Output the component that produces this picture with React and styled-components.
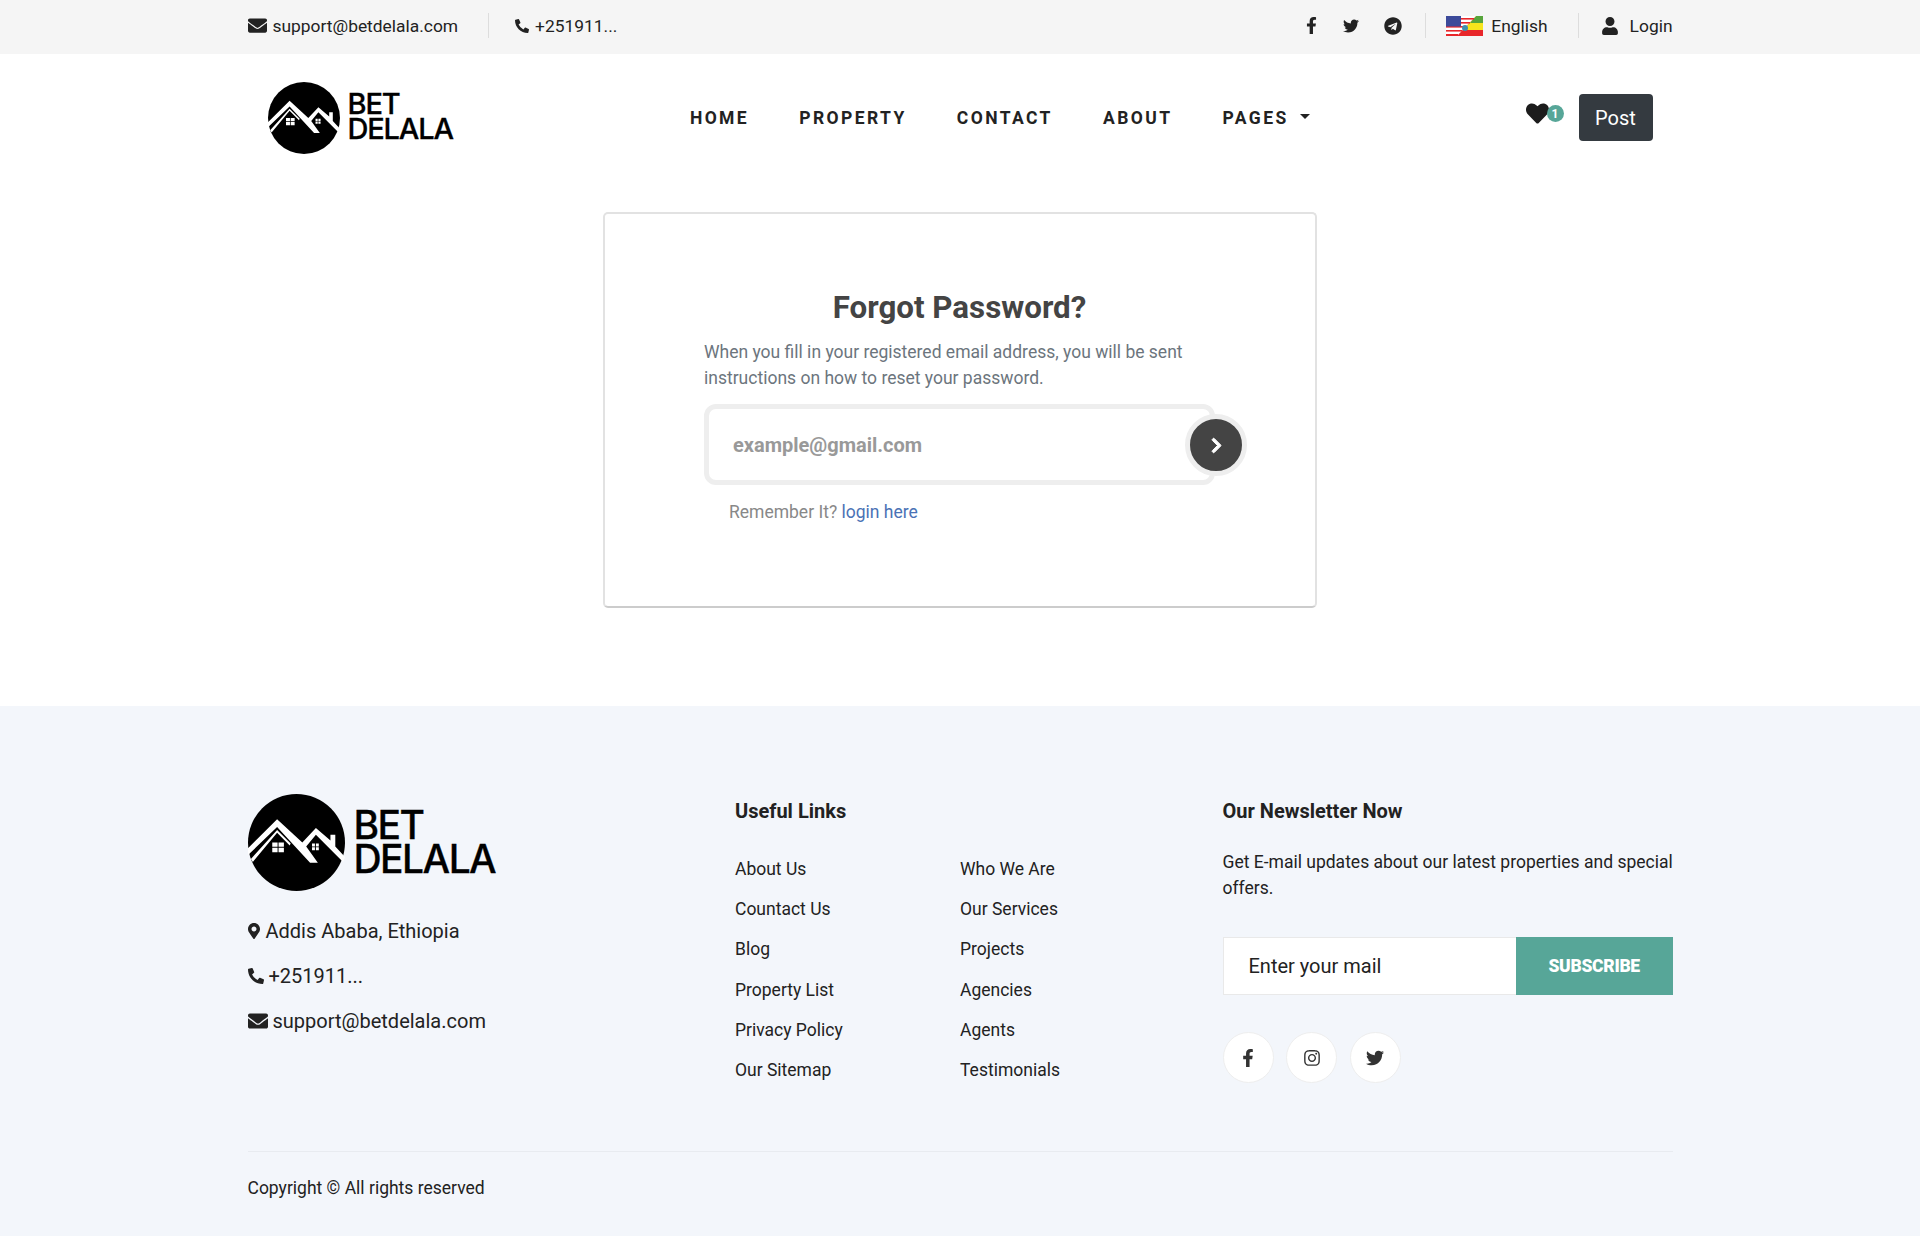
import React from 'react'
import styled, { createGlobalStyle } from 'styled-components'
import {
    FaEnvelope,
    FaPhoneAlt,
    FaFacebookF,
    FaTwitter,
    FaTelegram,
    FaUser,
    FaHeart,
    FaChevronRight,
    FaMapMarkerAlt,
    FaInstagram,
} from 'react-icons/fa'

const GlobalStyle = createGlobalStyle`
    * { box-sizing: border-box; }
    body {
        margin: 0;
        background: #fff;
        font-family: Roboto, "Liberation Sans", sans-serif;
        color: #212529;
    }
`

const Container = styled.div`
    width: 1425px;
    margin: 0 auto;
`

const TopBar = styled.div`
    height: 54px;
    background: #f5f5f5;
    font-size: 17.4px;
    color: #222;
`

const TopInner = styled(Container)`
    height: 100%;
    padding-bottom: 3px;
    display: flex;
    align-items: center;
    justify-content: space-between;
`

const TopGroup = styled.div`
    display: flex;
    align-items: center;
`

const TopItem = styled.span`
    display: flex;
    align-items: center;
    gap: ${(p) => p.$gap || 6}px;
    svg {
        width: auto;
        height: ${(p) => p.$icon || 17}px;
    }
`

const Sep = styled.span`
    width: 1px;
    height: 25px;
    background: #ddd;
    margin: 0 ${(p) => p.$right || 26}px 0 ${(p) => p.$left || 30}px;
`

const Social = styled.a`
    display: flex;
    margin-left: ${(p) => p.$gap || 0}px;
    color: #222;
    svg {
        width: auto;
        height: ${(p) => p.$size || 16}px;
    }
`

const Header = styled(Container)`
    height: 127px;
    padding: 0 20px;
    display: flex;
    align-items: center;
`

const LogoWrap = styled.div`
    display: flex;
    align-items: center;
    gap: ${(p) => p.$gap}px;
    color: #000;
`

const LogoText = styled.div`
    margin-top: ${(p) => p.$lift}px;
    font-family: Inter, Roboto, sans-serif;
    font-weight: 500;
    font-size: ${(p) => p.$size}px;
    line-height: ${(p) => p.$line}px;
    letter-spacing: -0.04em;
    -webkit-text-stroke: 0.3px #000;
`

const Nav = styled.nav`
    display: flex;
    gap: 50.2px;
    margin-left: 237px;
    flex: 1;
`

const NavLink = styled.a`
    font-size: 17.5px;
    font-weight: 700;
    letter-spacing: 2.4px;
    color: #222;
    display: flex;
    align-items: center;
`

const Caret = styled.span`
    margin-left: 11px;
    margin-bottom: 3px;
    border-top: 5px solid #222;
    border-left: 5px solid transparent;
    border-right: 5px solid transparent;
`

const Wish = styled.div`
    position: relative;
    width: 37px;
    margin-right: 16px;
    display: flex;
    font-size: 23px;
    color: #1c1c1c;
    margin-top: -8px;
`

const Badge = styled.span`
    position: absolute;
    left: 21px;
    top: 3px;
    width: 17px;
    height: 17px;
    border-radius: 50%;
    background: #57a698;
    color: #fff;
    font-size: 12px;
    font-weight: 700;
    display: flex;
    align-items: center;
    justify-content: center;
`

const PostButton = styled.button`
    width: 74px;
    height: 47px;
    border: 0;
    border-radius: 4px;
    background: #343a40;
    color: #fff;
    font-family: inherit;
    font-size: 20px;
`

const Main = styled.main`
    height: 525px;
    padding-top: 31px;
`

const Card = styled.div`
    width: 714px;
    height: 396px;
    margin: 0 auto;
    padding: 76px 100px 0 99px;
    background: #fff;
    border: 2px solid #e2e2e2;
    border-bottom-color: #ccc;
    border-radius: 5px;
`

const Title = styled.h2`
    margin: 0 0 13px;
    text-align: center;
    font-size: 31.3px;
    line-height: 36px;
    font-weight: 700;
    color: #444;
`

const Lead = styled.p`
    margin: 0 0 13px;
    font-size: 17.5px;
    line-height: 26px;
    font-weight: 400;
    color: #6c757d;
`

const InputBox = styled.div`
    position: relative;
    width: 511px;
    height: 81px;
    border: 5px solid #eee;
    border-radius: 12px;
    display: flex;
    align-items: center;
    padding-left: 24px;
    font-size: 20px;
    font-weight: 700;
    color: #999;
`

const RoundButton = styled.span`
    position: absolute;
    right: -37px;
    top: 5px;
    width: 62px;
    height: 62px;
    border-radius: 50%;
    border: 5px solid #eee;
    background: #444;
    color: #fff;
    font-size: 17px;
    display: flex;
    align-items: center;
    justify-content: center;
    svg {
        stroke: currentColor;
        stroke-width: 30px;
    }
`

const Remember = styled.div`
    margin: 17px 0 0 25px;
    font-size: 17.5px;
    font-weight: 400;
    color: #888;
    a { color: #4a72b5; }
`

const Footer = styled.footer`
    height: 530px;
    background: #f3f6fb;
    padding-top: 88px;
`

const FooterGrid = styled.div`
    display: grid;
    grid-template-columns: repeat(3, 450px);
    column-gap: 37.5px;
    height: 357px;
`

const ContactLine = styled.div`
    display: flex;
    align-items: center;
    gap: ${(p) => p.$gap || 5}px;
    height: 45px;
    font-size: 20px;
    color: #222;
    svg {
        width: ${(p) => (p.$iconWidth ? `${p.$iconWidth}px` : 'auto')};
        height: ${(p) => p.$icon || 18}px;
    }
`

const ContactList = styled.div`
    margin-top: 17px;
`

const ColTitle = styled.h4`
    margin: 5px 0 26px;
    font-size: 20px;
    line-height: 24px;
    font-weight: 700;
    color: #222;
`

const LinkGrid = styled.div`
    display: grid;
    grid-template-columns: 225px 225px;
    grid-auto-rows: 40.2px;
`

const FootLink = styled.a`
    font-size: 17.5px;
    line-height: 40px;
    color: #222;
`

const NewsText = styled.p`
    margin: 0 -5px 36px 0;
    font-size: 17.5px;
    line-height: 26px;
    color: #222;
`

const Subscribe = styled.div`
    display: flex;
    height: 58px;
    margin-bottom: 37px;
`

const MailField = styled.div`
    width: 294px;
    background: #fff;
    border: 1px solid #e9e9e9;
    border-right: 0;
    padding-left: 25px;
    display: flex;
    align-items: center;
    font-size: 20px;
    color: #222;
`

const SubscribeButton = styled.button`
    width: 157px;
    border: 0;
    background: #57a698;
    color: #fff;
    font-family: inherit;
    font-size: 17.5px;
    font-weight: 900;
    letter-spacing: -0.3px;
`

const Circles = styled.div`
    display: flex;
    gap: 12.7px;
`

const Circle = styled.a`
    width: 51px;
    height: 51px;
    border-radius: 50%;
    background: #fff;
    border: 1px solid #eee;
    color: #333;
    font-size: 18px;
    display: flex;
    align-items: center;
    justify-content: center;
`

const Copy = styled.div`
    border-top: 1px solid #e8ebf0;
    padding-top: 24px;
    font-size: 17.5px;
    line-height: 24px;
    color: #222;
`

const Flag = () => (
    <svg viewBox="0 0 37 20">
        <rect width="37" height="20" fill="#e8262a" />
        <polygon points="37,0 37,14 17,14 30,0" fill="#f6e51c" />
        <polygon points="37,0 37,7 24,7 30,0" fill="#57a53b" />
        <polygon points="0,0 30,0 11,20 0,20" fill="#fff" />
        <rect y="2" width="28" height="1.6" fill="#e8262a" />
        <rect y="6" width="24" height="1.6" fill="#e8262a" />
        <rect y="10" width="20" height="1.6" fill="#e8262a" />
        <rect y="14" width="16" height="1.6" fill="#e8262a" />
        <rect y="18" width="12" height="2" fill="#e8262a" />
        <rect width="15" height="10.5" fill="#3c4a9a" />
        <circle cx="19" cy="12" r="3" fill="#3f8fb0" />
    </svg>
)

// round badge with the two roofs cut out of it
const LogoMark = ({ size }) => (
    <svg width={size} height={size} viewBox="0 0 100 100">
        <circle cx="50" cy="50" r="50" fill="#000" />
        <path
            d="M0 56 L30 26 L56 50 L70 35 L85 48 L85 42 L90 42 L90 54 L100 65 L98 70 L70 42 L60 54 L72 71 L64 71 L30 34 L0 63 Z"
            fill="#fff"
        />
        <path d="M3 67 L30 37 L44 51 L43 53 L30 40 L5 70 Z" fill="#fff" />
        <path d="M25 50h5.5v4.5H25zM31.5 50H37v4.5h-5.5zM25 55.5h5.5V60H25zM31.5 55.5H37V60h-5.5z" fill="#fff" />
        <path d="M66 51h3v3h-3zM70 51h3v3h-3zM66 55h3v3h-3zM70 55h3v3h-3z" fill="#fff" />
    </svg>
)

const usefulLinks = [
    'About Us',
    'Who We Are',
    'Countact Us',
    'Our Services',
    'Blog',
    'Projects',
    'Property List',
    'Agencies',
    'Privacy Policy',
    'Agents',
    'Our Sitemap',
    'Testimonials',
]

const App = () => (
    <React.Fragment>
        <GlobalStyle />
        <TopBar>
            <TopInner>
                <TopGroup>
                    <TopItem $icon={19}>
                        <FaEnvelope />
                        support@betdelala.com
                    </TopItem>
                    <Sep />
                    <TopItem $icon={14} $gap={6}>
                        <FaPhoneAlt />
                        +251911...
                    </TopItem>
                </TopGroup>
                <TopGroup>
                    <Social $size={17}>
                        <FaFacebookF />
                    </Social>
                    <Social $gap={23}>
                        <FaTwitter />
                    </Social>
                    <Social $gap={25} $size={18}>
                        <FaTelegram />
                    </Social>
                    <Sep $left={23} $right={20} />
                    <TopItem $icon={20} $gap={8}>
                        <Flag />
                        English
                    </TopItem>
                    <Sep $left={30} $right={22} />
                    <TopItem $icon={18} $gap={11}>
                        <FaUser />
                        Login
                    </TopItem>
                </TopGroup>
            </TopInner>
        </TopBar>

        <Header>
            <LogoWrap $gap={8}>
                <LogoMark size={72} />
                <LogoText $size={29} $line={25} $lift={-3}>
                    BET
                    <br />
                    DELALA
                </LogoText>
            </LogoWrap>
            <Nav>
                <NavLink>HOME</NavLink>
                <NavLink>PROPERTY</NavLink>
                <NavLink>CONTACT</NavLink>
                <NavLink>ABOUT</NavLink>
                <NavLink>
                    PAGES
                    <Caret />
                </NavLink>
            </Nav>
            <Wish>
                <FaHeart />
                <Badge>1</Badge>
            </Wish>
            <PostButton>Post</PostButton>
        </Header>

        <Main>
            <Card>
                <Title>Forgot Password?</Title>
                <Lead>
                    When you fill in your registered email address, you will be sent instructions on how to reset your
                    password.
                </Lead>
                <InputBox>
                    example@gmail.com
                    <RoundButton>
                        <FaChevronRight />
                    </RoundButton>
                </InputBox>
                <Remember>
                    Remember It? <a>login here</a>
                </Remember>
            </Card>
        </Main>

        <Footer>
            <Container>
                <FooterGrid>
                    <div>
                        <LogoWrap $gap={9}>
                            <LogoMark size={97} />
                            <LogoText $size={39} $line={34} $lift={-1}>
                                BET
                                <br />
                                DELALA
                            </LogoText>
                        </LogoWrap>
                        <ContactList>
                            <ContactLine $icon={16} $iconWidth={12} $gap={6}>
                                <FaMapMarkerAlt />
                                Addis Ababa, Ethiopia
                            </ContactLine>
                            <ContactLine $icon={16} $gap={5}>
                                <FaPhoneAlt />
                                +251911...
                            </ContactLine>
                            <ContactLine $icon={20}>
                                <FaEnvelope />
                                support@betdelala.com
                            </ContactLine>
                        </ContactList>
                    </div>
                    <div>
                        <ColTitle>Useful Links</ColTitle>
                        <LinkGrid>
                            {usefulLinks.map((item) => (
                                <FootLink key={item}>{item}</FootLink>
                            ))}
                        </LinkGrid>
                    </div>
                    <div>
                        <ColTitle>Our Newsletter Now</ColTitle>
                        <NewsText>Get E-mail updates about our latest properties and special offers.</NewsText>
                        <Subscribe>
                            <MailField>Enter your mail</MailField>
                            <SubscribeButton>SUBSCRIBE</SubscribeButton>
                        </Subscribe>
                        <Circles>
                            <Circle>
                                <FaFacebookF />
                            </Circle>
                            <Circle>
                                <FaInstagram />
                            </Circle>
                            <Circle>
                                <FaTwitter />
                            </Circle>
                        </Circles>
                    </div>
                </FooterGrid>
                <Copy>Copyright © All rights reserved</Copy>
            </Container>
        </Footer>
    </React.Fragment>
)

export default App
